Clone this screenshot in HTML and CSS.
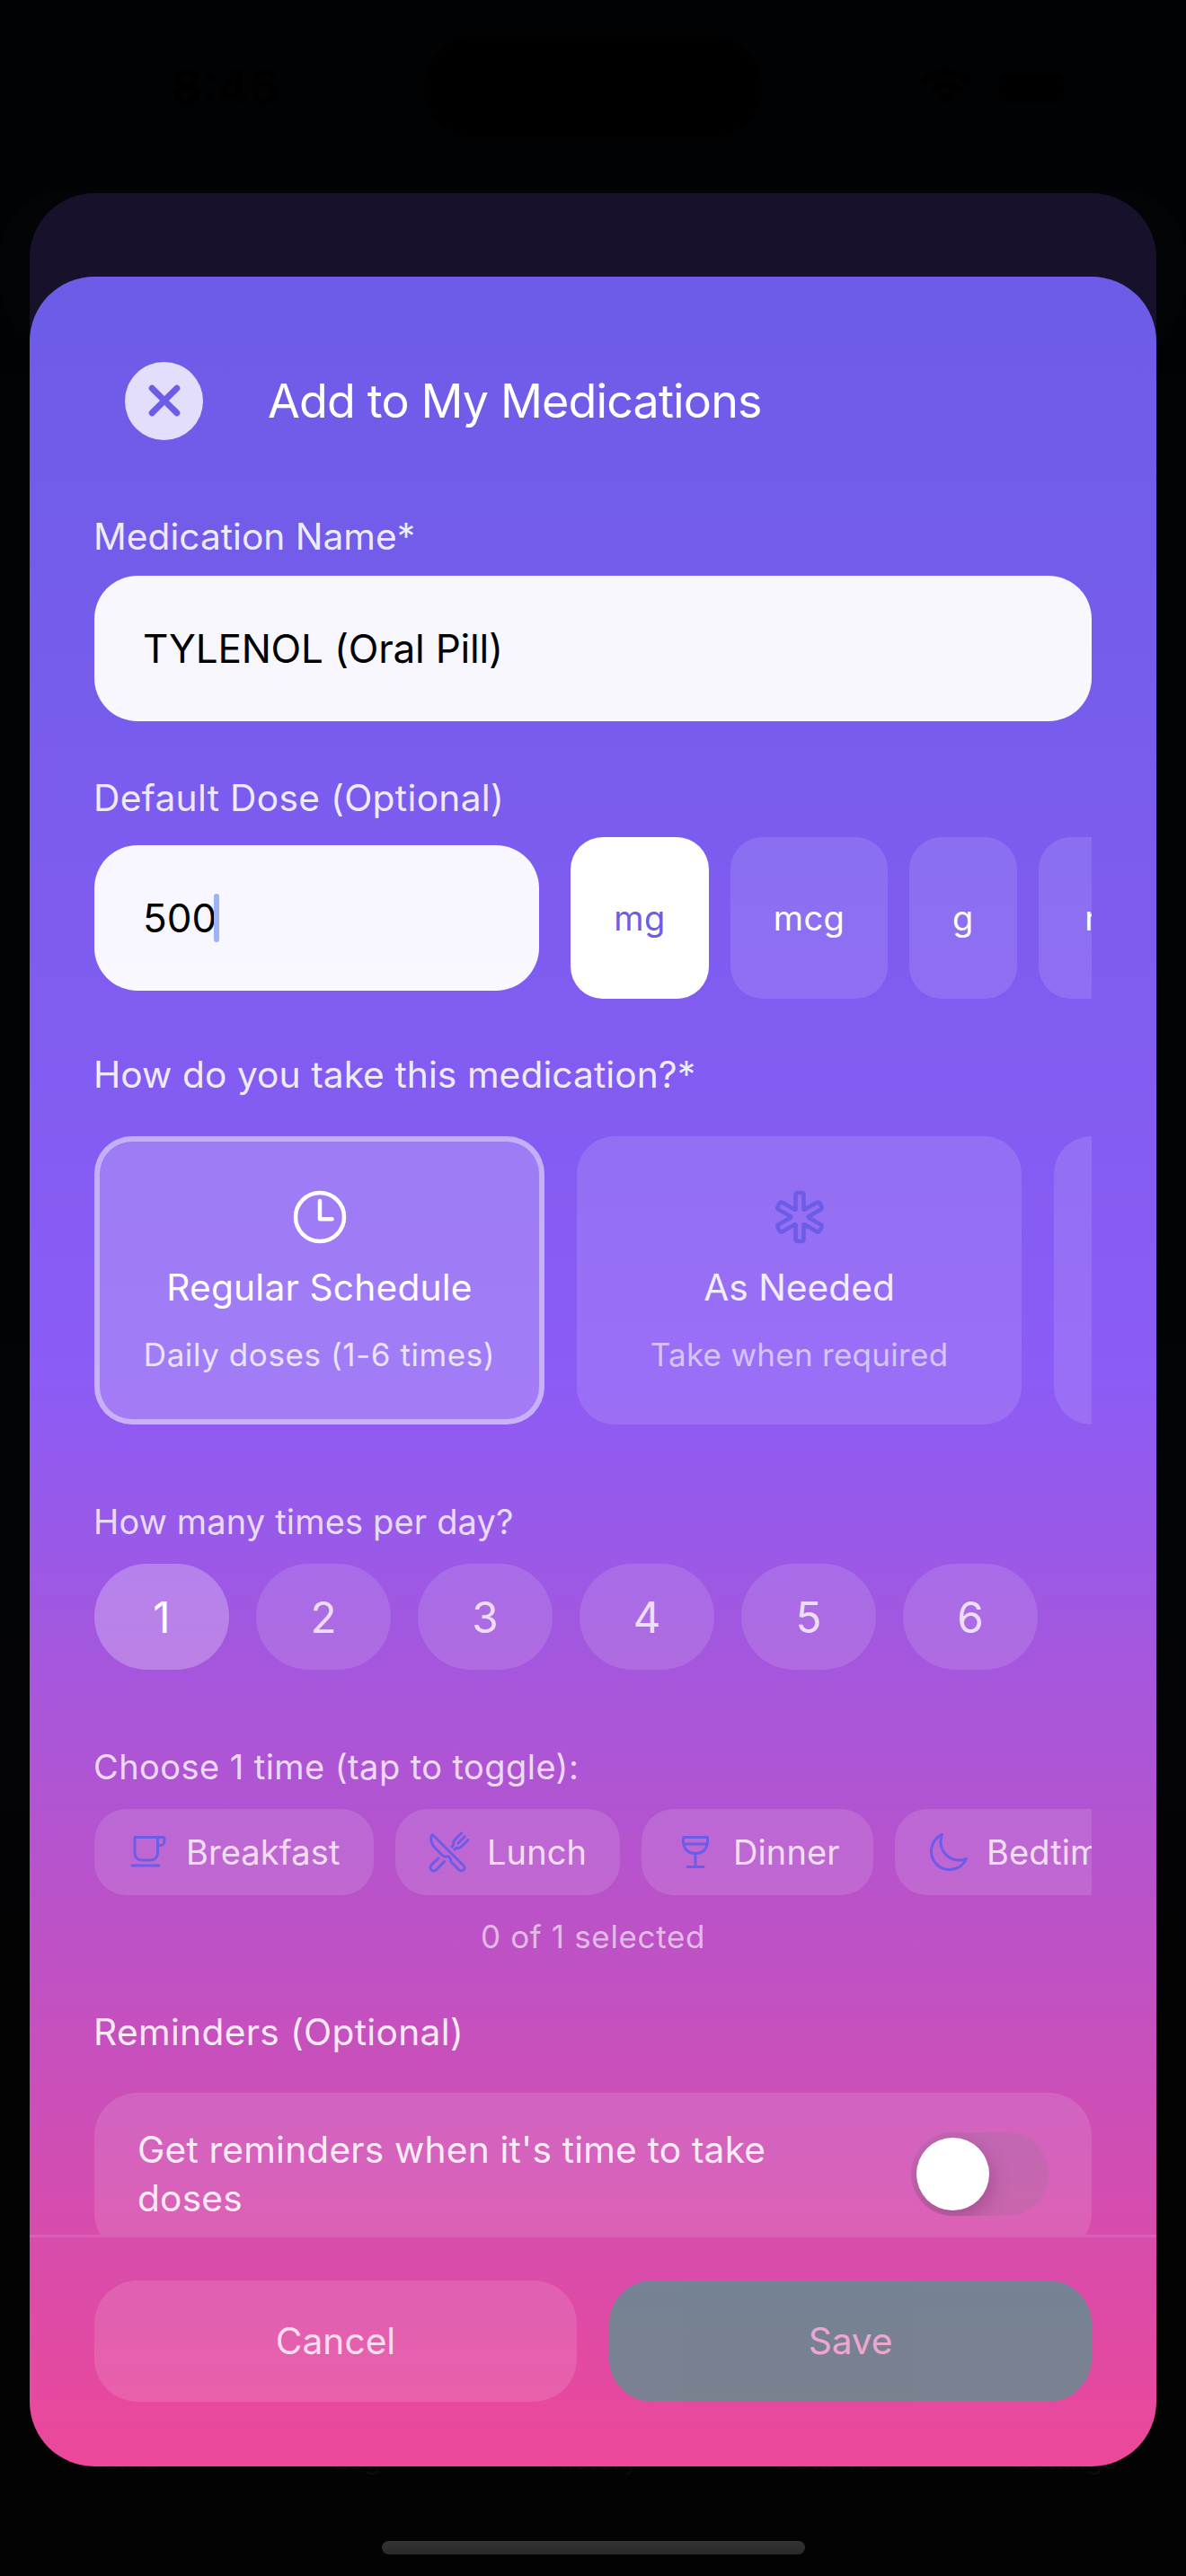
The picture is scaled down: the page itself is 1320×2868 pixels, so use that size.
FILE: index.html
```html
<!DOCTYPE html>
<html lang="en">
<head>
<meta charset="utf-8">
<title>Add to My Medications</title>
<link rel="stylesheet" href="styles.css">
</head>
<body>
<div class="screen">
  <div class="backdrop">
    <div class="statusbar">
      <span class="clock">8:46</span>
      <span class="island"></span>
      <span class="signals">
        <svg class="cell" viewBox="0 0 68 12"><circle cx="6" cy="6" r="5"/><circle cx="24" cy="6" r="5"/><circle cx="42" cy="6" r="5"/><circle cx="60" cy="6" r="5"/></svg>
        <svg class="wifi" viewBox="0 0 57 42"><path d="M28 42l-9-10a14 14 0 0 1 18 0zM10 23a27 27 0 0 1 37 0l-5 5a20 20 0 0 0-27 0zM0 13a41 41 0 0 1 57 0l-6 6a33 33 0 0 0-45 0z"/></svg>
        <span class="battery"></span>
      </span>
    </div>
    <div class="panel"></div>
    <div class="tabs"><span>Home</span><span>Log</span><span>History</span><span>Data Viz</span><span>Settings</span></div>
    <div class="home-indicator"></div>
  </div>

  <div class="sheet-behind"></div>

  <main class="sheet">
    <header class="header">
      <button class="close" aria-label="Close">
        <svg viewBox="0 0 36 36"><path d="M4.2 4.2l27.6 27.6M31.8 4.2L4.2 31.8"/></svg>
      </button>
      <h1 class="title">Add to My Medications</h1>
    </header>

    <div class="form">
      <label class="label">Medication Name*</label>
      <div class="input name"><span class="name-text">TYLENOL (Oral Pill)</span></div>

      <label class="label dose-label">Default Dose (Optional)</label>
      <div class="dose-row">
        <div class="input dose"><span>500</span><i class="caret"></i></div>
        <div class="units">
          <button class="unit mg active">mg</button>
          <button class="unit mcg">mcg</button>
          <button class="unit g">g</button>
          <button class="unit ml">mL</button>
        </div>
      </div>

      <label class="label method-label">How do you take this medication?*</label>
      <div class="methods">
        <div class="method active">
          <svg class="method-icon" viewBox="0 0 512 512"><path d="M256 64C150 64 64 150 64 256s86 192 192 192 192-86 192-192S362 64 256 64z"/><path d="M256 128v144h96"/></svg>
          <div class="method-name">Regular Schedule</div>
          <div class="method-sub wide">Daily doses (1-6 times)</div>
        </div>
        <div class="method">
          <svg class="method-icon" viewBox="0 0 512 512"><path d="M429.93 174.27l-16.47-28.59a15.49 15.49 0 00-21.15-5.7l-98.39 57a4 4 0 01-6-3.5L288 80a16 16 0 00-16-16h-32a16 16 0 00-16 16l.07 113.57a4 4 0 01-6 3.5l-98.39-57a15.49 15.49 0 00-21.15 5.7l-16.46 28.59a15.42 15.42 0 005.69 21.1l98.49 57.08a4 4 0 010 6.92l-98.49 57.08a15.42 15.42 0 00-5.69 21.1l16.46 28.59a15.49 15.49 0 0021.15 5.7l98.39-57a4 4 0 016 3.5L224 432a16 16 0 0016 16h32a16 16 0 0016-16l-.07-113.57a4 4 0 016-3.5l98.39 57a15.49 15.49 0 0021.15-5.7l16.47-28.59a15.42 15.42 0 00-5.69-21.1l-98.49-57.08a4 4 0 010-6.92l98.49-57.08a15.42 15.42 0 005.68-21.1z"/></svg>
          <div class="method-name plain">As Needed</div>
          <div class="method-sub">Take when required</div>
        </div>
        <div class="method"></div>
      </div>

      <label class="label small times-label">How many times per day?</label>
      <div class="counts">
        <button class="count active">1</button>
        <button class="count">2</button>
        <button class="count">3</button>
        <button class="count">4</button>
        <button class="count">5</button>
        <button class="count">6</button>
      </div>

      <label class="label small choose-label">Choose 1 time (tap to toggle):</label>
      <div class="meals">
        <button class="meal breakfast">
          <svg viewBox="0 0 512 512"><path d="M368 80h64a16 16 0 0116 16v34a46 46 0 01-46 46h-34M96 80h272v192a80 80 0 01-80 80H176a80 80 0 01-80-80V80zM64 416h320"/></svg>
          <span>Breakfast</span>
        </button>
        <button class="meal lunch">
          <svg viewBox="0 0 512 512"><path d="M57.49 47.74l368.43 368.43a37.28 37.28 0 010 52.72h0a37.29 37.29 0 01-52.72 0l-90-91.55a32 32 0 01-9.2-22.43v-5.53a32 32 0 00-9.52-22.78l-11.62-10.73a32 32 0 00-29.8-7.44h0a48.53 48.53 0 01-46.56-12.63l-85.43-85.44C40.39 159.68 21.74 83.15 57.49 47.74z"/><path d="M400 32l-77.25 77.25A64 64 0 00304 154.51v14.86a16 16 0 01-4.69 11.32L288 192M320 224l11.31-11.31a16 16 0 0111.32-4.69h14.86a64 64 0 0045.26-18.75L480 112M440 72l-80 80M200 368l-99.72 100.28a40 40 0 01-56.56 0h0a40 40 0 010-56.56L128 328"/></svg>
          <span>Lunch</span>
        </button>
        <button class="meal dinner">
          <svg viewBox="0 0 512 512"><path d="M398.57 80H113.43v16S87.51 272 256 272 398.57 96 398.57 96zM256 272v160M352 432H160M112 160h288"/></svg>
          <span>Dinner</span>
        </button>
        <button class="meal bedtime">
          <svg viewBox="0 0 512 512"><path d="M160 136c0-30.62 4.51-61.61 16-88C99.57 81.27 48 159.32 48 248c0 119.29 96.71 216 216 216 88.68 0 166.73-51.57 200-128-26.39 11.49-57.38 16-88 16-119.29 0-216-96.71-216-216z"/></svg>
          <span>Bedtime</span>
        </button>
      </div>
      <p class="selected-note">0 of 1 selected</p>

      <label class="label reminders-label">Reminders (Optional)</label>
      <div class="reminder">
        <p class="reminder-text">Get reminders when it's time to take doses</p>
        <span class="switch"><i class="thumb"></i></span>
      </div>
    </div>

    <footer class="footer">
      <button class="btn cancel">Cancel</button>
      <button class="btn save">Save</button>
    </footer>
  </main>
</div>
</body>
</html>
```
FILE: styles.css
```css
* { box-sizing: border-box; }

body {
  margin: 0;
  background: #010203;
  font-family: Inter, "Liberation Sans", sans-serif;
  font-weight: 400;
  color: #fff;
}

button {
  border: 0;
  margin: 0;
  padding: 0;
  font: inherit;
  color: inherit;
}

p, h1 { margin: 0; font-weight: 400; }

/* Layers share one grid cell and stack in source order */
.screen {
  display: grid;
  width: 1320px;
  height: 2868px;
  overflow: hidden;
}

.screen > * { grid-area: 1 / 1; }

/* Dimmed app behind the modal */
.backdrop {
  display: flex;
  flex-direction: column;
  background: linear-gradient(#010203, #030406 60%, #030303);
}

.statusbar {
  display: flex;
  align-items: flex-start;
  height: 211px;
  padding-top: 41px;
  color: #000;
}

.clock {
  width: 472px;
  padding: 22px 0 0 191px;
  font-size: 53px;
  font-weight: 600;
  line-height: 68px;
}

.island {
  width: 376px;
  height: 111px;
  border-radius: 56px;
  background: #000;
}

.signals {
  display: flex;
  align-items: flex-end;
  height: 76px;
  padding-left: 88px;
  fill: #000;
}

.cell { width: 68px; height: 12px; fill: #010202; }
.wifi { width: 57px; height: 42px; margin-left: 21px; }
.battery { width: 72px; height: 32px; margin: 0 0 3px 30px; border-radius: 10px; background: #000; }

.panel {
  height: 180px;
  border-radius: 72px;
  background: #030405;
}

.tabs {
  display: grid;
  grid-template-columns: repeat(5, 1fr);
  margin-top: auto;
  padding: 0 3px;
  color: #0b0b0b;
  font-size: 30px;
  line-height: 36px;
  text-align: center;
}

.home-indicator {
  width: 471px;
  height: 15px;
  margin: 73px auto 24px;
  border-radius: 8px;
  background: linear-gradient(#343434, #292929);
}

.sheet-behind {
  height: 400px;
  margin: 215px 33px 0;
  border-radius: 72px 72px 0 0;
  background: #17112b;
}

/* Modal sheet */
.sheet {
  display: flex;
  flex-direction: column;
  height: 2438px;
  margin: 308px 33px 0;
  border-radius: 72px;
  overflow: hidden;
  background: linear-gradient(#6c5ce7, #8b5cf6 50%, #ec4899);
}

.header {
  display: flex;
  align-items: center;
  gap: 72px;
  height: 88px;
  margin: 94px 0 82px 106px;
}

.close {
  display: grid;
  place-items: center;
  width: 87px;
  height: 87px;
  border-radius: 50%;
  background: rgba(255, 255, 255, .8);
}

.close svg {
  width: 36px;
  height: 36px;
  fill: none;
  stroke: #6c5ce7;
  stroke-width: 7;
  stroke-linecap: round;
}

.title {
  padding-top: 1px;
  font-size: 52px;
  line-height: 64px;
  letter-spacing: -.86px;
}

.form {
  display: flex;
  flex-direction: column;
  height: 1916px;
  padding: 0 72px;
  overflow: hidden;
}

.form > * { flex-shrink: 0; }

.label {
  height: 50px;
  margin-left: -1px;
  padding-top: 1px;
  font-size: 40.7px;
  line-height: 50px;
  color: rgba(255, 255, 255, .9);
}

.label.small { padding-top: 0; font-size: 38px; color: rgba(255, 255, 255, .8); }

.dose-label { margin-top: 60px; letter-spacing: .31px; }
.method-label { margin-top: 59px; letter-spacing: .07px; }
.times-label { margin-top: 83px; letter-spacing: .17px; }
.choose-label { margin-top: 83px; letter-spacing: .44px; }
.reminders-label { margin-top: 56px; letter-spacing: .32px; }

.input {
  display: flex;
  align-items: center;
  height: 162px;
  padding-left: 54px;
  border-radius: 48px;
  background: rgba(255, 255, 255, .95);
  color: #000;
  font-size: 44px;
}

.name { margin-top: 19px; }
.name-text { letter-spacing: -.2px; }
.dose { width: 495px; }

.caret {
  width: 6px;
  height: 54px;
  margin-left: -3px;
  border-radius: 3px;
  background: #9db3f8;
}

.dose-row {
  display: flex;
  align-items: center;
  gap: 35px;
  margin-top: 19px;
}

.units {
  display: flex;
  flex: 1;
  gap: 24px;
  min-width: 0;
  overflow: hidden;
}

.unit {
  flex: none;
  height: 180px;
  border-radius: 36px;
  background: rgba(255, 255, 255, .12);
  font-size: 38px;
  letter-spacing: .45px;
}

.unit.active { background: #fff; color: #6c5ce7; }
.mg { width: 154px; }
.mcg { width: 175px; }
.g { width: 120px; }
.ml { width: 158px; }

.methods {
  display: flex;
  gap: 36px;
  margin-top: 44px;
  overflow: hidden;
}

.method {
  display: flex;
  flex: none;
  flex-direction: column;
  align-items: center;
  width: 495px;
  height: 321px;
  padding-top: 54px;
  border-radius: 42px;
  background: rgba(255, 255, 255, .12);
}

.method.active {
  width: 501px;
  padding-top: 48px;
  border: 6px solid rgba(255, 255, 255, .4);
  background: rgba(255, 255, 255, .2);
}

.method-icon {
  width: 72px;
  height: 72px;
  fill: none;
  stroke: #6c5ce7;
  stroke-width: 32;
  stroke-linecap: round;
  stroke-linejoin: round;
}

.active .method-icon { stroke: #fff; }

.method-name {
  margin-top: 18px;
  font-size: 40.7px;
  line-height: 50px;
  letter-spacing: .19px;
}

.method-name.plain { letter-spacing: 0; color: rgba(255, 255, 255, .9); }

.method-sub {
  margin-top: 27px;
  font-size: 35px;
  line-height: 44px;
  letter-spacing: .28px;
  color: rgba(255, 255, 255, .6);
}

.method-sub.wide { letter-spacing: .58px; }
.active .method-sub { color: rgba(255, 255, 255, .8); }

.counts {
  display: flex;
  gap: 30px;
  margin-top: 22px;
}

.count {
  width: 150px;
  height: 118px;
  border-radius: 59px;
  background: rgba(255, 255, 255, .12);
  color: rgba(255, 255, 255, .8);
  font-size: 47.5px;
}

.count.active { background: rgba(255, 255, 255, .25); color: #fff; }

.meals {
  display: flex;
  gap: 24px;
  margin-top: 22px;
  overflow: hidden;
}

.meal {
  display: flex;
  flex: none;
  align-items: center;
  gap: 18px;
  height: 96px;
  padding: 0 36px;
  border-radius: 36px;
  background: rgba(255, 255, 255, .12);
  color: rgba(255, 255, 255, .8);
  font-size: 38px;
  letter-spacing: .1px;
}

.meal svg {
  width: 48px;
  height: 48px;
  fill: none;
  stroke: #6c5ce7;
  stroke-width: 32;
  stroke-linecap: round;
  stroke-linejoin: round;
}

.breakfast { width: 311px; }
.lunch { width: 250px; }
.dinner { width: 258px; }
.bedtime { width: 290px; }

.selected-note {
  margin-top: 21px;
  font-size: 35px;
  line-height: 50px;
  letter-spacing: .64px;
  text-align: center;
  color: rgba(255, 255, 255, .6);
}

.reminder {
  display: flex;
  justify-content: space-between;
  align-items: center;
  height: 181px;
  margin-top: 43px;
  padding: 0 48px;
  border-radius: 48px;
  background: rgba(255, 255, 255, .12);
}

.reminder-text {
  width: 780px;
  font-size: 40.7px;
  line-height: 54px;
  letter-spacing: .18px;
  color: rgba(255, 255, 255, .9);
}

.switch {
  width: 153px;
  height: 93px;
  padding: 6px;
  border-radius: 47px;
  background: rgba(120, 120, 128, .18);
  overflow: hidden;
}

.thumb {
  display: block;
  width: 81px;
  height: 81px;
  border-radius: 50%;
  background: #fff;
  box-shadow: 2px 8px 22px rgba(60, 0, 60, .25);
}

.footer {
  display: flex;
  gap: 36px;
  height: 258px;
  padding: 48px 72px 0;
  border-top: 3px solid rgba(255, 255, 255, .1);
}

.btn {
  flex: 1;
  height: 135px;
  border-radius: 48px;
  font-size: 40.7px;
}

.cancel { background: rgba(255, 255, 255, .12); color: rgba(255, 255, 255, .8); }
.save { background: #10b981; color: #fff; opacity: .5; letter-spacing: -.14px; }
```
